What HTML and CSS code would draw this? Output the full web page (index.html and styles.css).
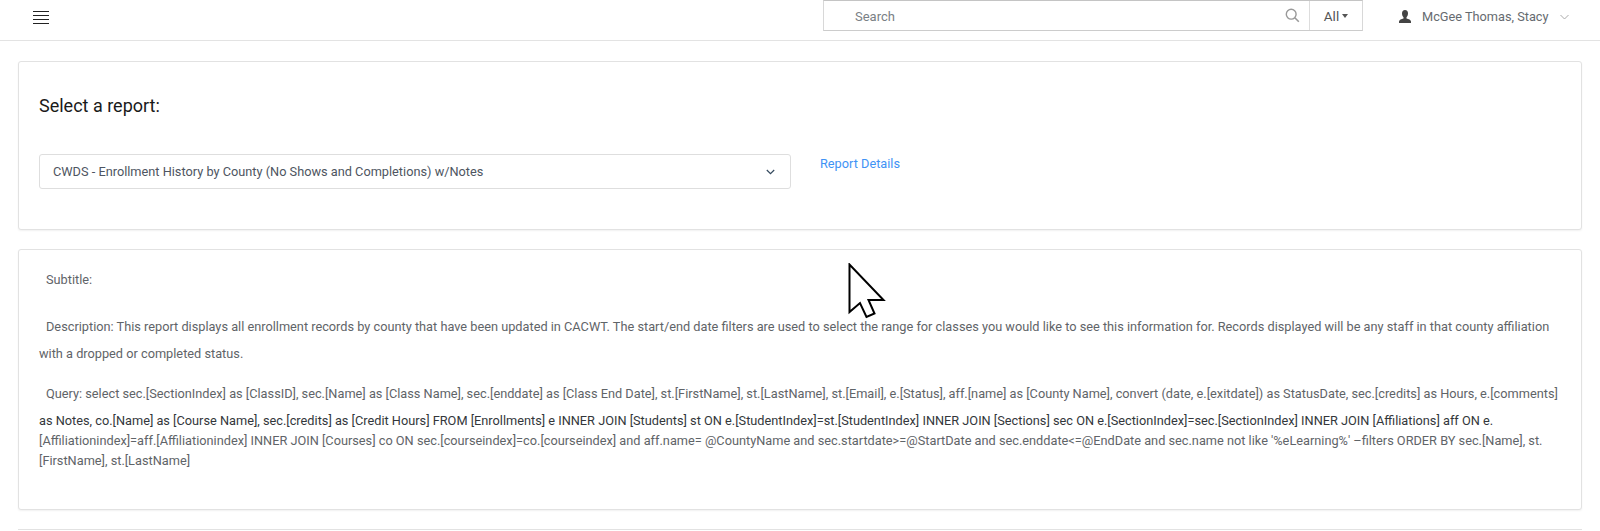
FILE: index.html

```html
<!DOCTYPE html>
<html lang="en">
<head>
    <meta charset="UTF-8">
    <title>Reports</title>
    <link rel="stylesheet" href="styles.css">
</head>
<body>

<header class="navbar">
    <button class="menu-button" aria-label="Menu">
        <svg width="16" height="14" viewBox="0 0 16 14"><path d="M0 1.5h16M0 5.5h16M0 9.5h16M0 13.5h16" stroke="#222" stroke-width="1"/></svg>
    </button>
    <div class="search-box">
        <span class="search-text">Search</span>
        <svg class="search-icon" width="15" height="15" viewBox="0 0 15 15"><circle cx="6.2" cy="6.2" r="4.9" fill="none" stroke="#999" stroke-width="1.4"/><path d="M9.8 9.8l4 4" stroke="#999" stroke-width="1.6"/></svg>
        <div class="search-scope">All <span class="caret"></span></div>
    </div>
    <div class="user-menu">
        <svg width="14" height="14" viewBox="0 0 14 14"><path d="M7 0c2 0 3 1.500 3 3.500 0 1.500-.7 3-1.500 3.700v1.200c2 .6 4.500 1.300 4.500 3.100V13H1v-1.500c0-1.800 2.500-2.500 4.500-3.100V7.200C4.700 6.500 4 5 4 3.500 4 1.500 5 0 7 0z" fill="#444"/></svg>
        <span class="user-name">McGee Thomas, Stacy</span>
        <svg width="9" height="6" viewBox="0 0 9 6"><path d="M.5 1l4 4 4-4" fill="none" stroke="#aaa" stroke-width="1"/></svg>
    </div>
</header>

<main class="content">
    <section class="card report-card">
        <h2>Select a report:</h2>
        <div class="report-row">
            <div class="report-select">
                <span>CWDS - Enrollment History by County (No Shows and Completions) w/Notes</span>
                <svg width="9" height="6" viewBox="0 0 9 6"><path d="M.8 1l3.700 3.700L8.200 1" fill="none" stroke="#34495e" stroke-width="1.200"/></svg>
            </div>
            <a class="report-link" href="#">Report Details</a>
        </div>
    </section>

    <section class="card details-card">
        <p class="tall indent">Subtitle:</p>
        <p class="tall indent gap-desc">Description: This report displays all enrollment records by county that have been updated in CACWT. The start/end date filters are used to select the range for classes you would like to see this information for. Records displayed will be any staff in that county affiliation</p>
        <p class="tall">with a dropped or completed status.</p>
        <p class="tall indent gap-query">Query: select sec.[SectionIndex] as [ClassID], sec.[Name] as [Class Name], sec.[enddate] as [Class End Date], st.[FirstName], st.[LastName], st.[Email], e.[Status], aff.[name] as [County Name], convert (date, e.[exitdate]) as StatusDate, sec.[credits] as Hours, e.[comments]</p>
        <p class="short dark">as Notes, co.[Name] as [Course Name], sec.[credits] as [Credit Hours] FROM [Enrollments] e INNER JOIN [Students] st ON e.[StudentIndex]=st.[StudentIndex] INNER JOIN [Sections] sec ON e.[SectionIndex]=sec.[SectionIndex] INNER JOIN [Affiliations] aff ON e.</p>
        <p class="short">[Affiliationindex]=aff.[Affiliationindex] INNER JOIN [Courses] co ON sec.[courseindex]=co.[courseindex] and aff.name= @CountyName and sec.startdate&gt;=@StartDate and sec.enddate&lt;=@EndDate and sec.name not like '%eLearning%' –filters ORDER BY sec.[Name], st.</p>
        <p class="short">[FirstName], st.[LastName]</p>
    </section>
</main>

<div class="page-rule"></div>

<svg class="cursor" width="38" height="56" viewBox="0 0 38 56"><path d="M1.500 1.500V49l10.500-9 6.500 14 8-3.500-6-13.500h15z" fill="#fff" stroke="#000" stroke-width="2"/></svg>

</body>
</html>
```

FILE: styles.css

```css
html, body {
    height: 531px;
    overflow: hidden;
}
body {
    font-family: 'Roboto', sans-serif;
    font-size: 12.75px;
    background-color: #ffffff;
    color: #5f6468;
    margin: 0;
    padding: 0;
    position: relative;
}
.navbar {
    height: 40px;
    border-bottom: 1px solid #e3e3e3;
    display: flex;
    align-items: flex-start;
    box-sizing: content-box;
}
.menu-button {
    background: none;
    border: none;
    padding: 0;
    margin: 10px 0 0 33px;
    height: 14px;
    display: flex;
}
.search-box {
    margin-left: 774px;
    width: 540px;
    height: 31px;
    border: 1px solid #d8d8d8;
    border-top-color: #c4c4c4;
    border-bottom: 1px solid #cccccc;
    display: flex;
    align-items: center;
    box-sizing: border-box;
    flex-shrink: 0;
}
.search-text {
    margin-left: 31px;
    flex: 1;
    color: #7a7f85;
    font-size: 13px;
    padding-top: 2px;
}
.search-icon {
    margin-right: 9px;
}
.search-scope {
    width: 53px;
    height: 100%;
    border-left: 1px solid #dddddd;
    display: flex;
    align-items: center;
    justify-content: center;
    gap: 3px;
    color: #555555;
    font-size: 13.5px;
    padding-top: 1px;
    box-sizing: border-box;
}
.caret {
    border-top: 4px solid #555555;
    border-left: 3.500px solid transparent;
    border-right: 3.500px solid transparent;
}
.user-menu {
    margin-left: 35px;
    display: flex;
    align-items: center;
    gap: 8px;
    height: 33px;
    color: #666b70;
    white-space: nowrap;
}
.user-name {
    margin-left: 2px;
    margin-right: 3px;
    font-size: 12.75px;
}
.content {
    padding: 20px 18px 0 18px;
    display: flex;
    flex-direction: column;
    gap: 19px;
}
.card {
    border: 1px solid #e2e2e2;
    border-radius: 3px;
    box-shadow: 0 1px 2px rgba(0, 0, 0, 0.06);
    box-sizing: border-box;
    background-color: #ffffff;
}
.report-card {
    height: 169px;
    padding: 34px 20px 0 20px;
}
.report-card h2 {
    margin: 0;
    font-size: 18px;
    font-weight: 400;
    line-height: 20px;
    color: #1a1a1a;
}
.report-row {
    margin-top: 38px;
    display: flex;
    align-items: flex-start;
}
.report-select {
    width: 752px;
    height: 35px;
    border: 1px solid #dedede;
    border-radius: 3px;
    box-sizing: border-box;
    padding: 0 15px 0 13px;
    display: flex;
    align-items: center;
    justify-content: space-between;
    color: #4e5561;
}
.report-link {
    margin: 2px 0 0 29px;
    color: #3f93f5;
    text-decoration: none;
    line-height: 16px;
}
.details-card {
    height: 261px;
    padding: 16px 20px 0 20px;
}
.details-card p {
    margin: 0;
    white-space: nowrap;
}
.tall {
    line-height: 27px;
}
.short {
    line-height: 20px;
}
.details-card .dark {
    color: #33373b;
    margin-top: 3.5px;
}
.indent {
    text-indent: 7px;
}
.details-card .gap-desc {
    margin-top: 20px;
}
.details-card .gap-query {
    margin-top: 13px;
}
.page-rule {
    margin: 19px 18px 0 18px;
    border-top: 1px solid #e2e2e2;
}
.cursor {
    position: absolute;
    left: 848px;
    top: 263px;
}
```
